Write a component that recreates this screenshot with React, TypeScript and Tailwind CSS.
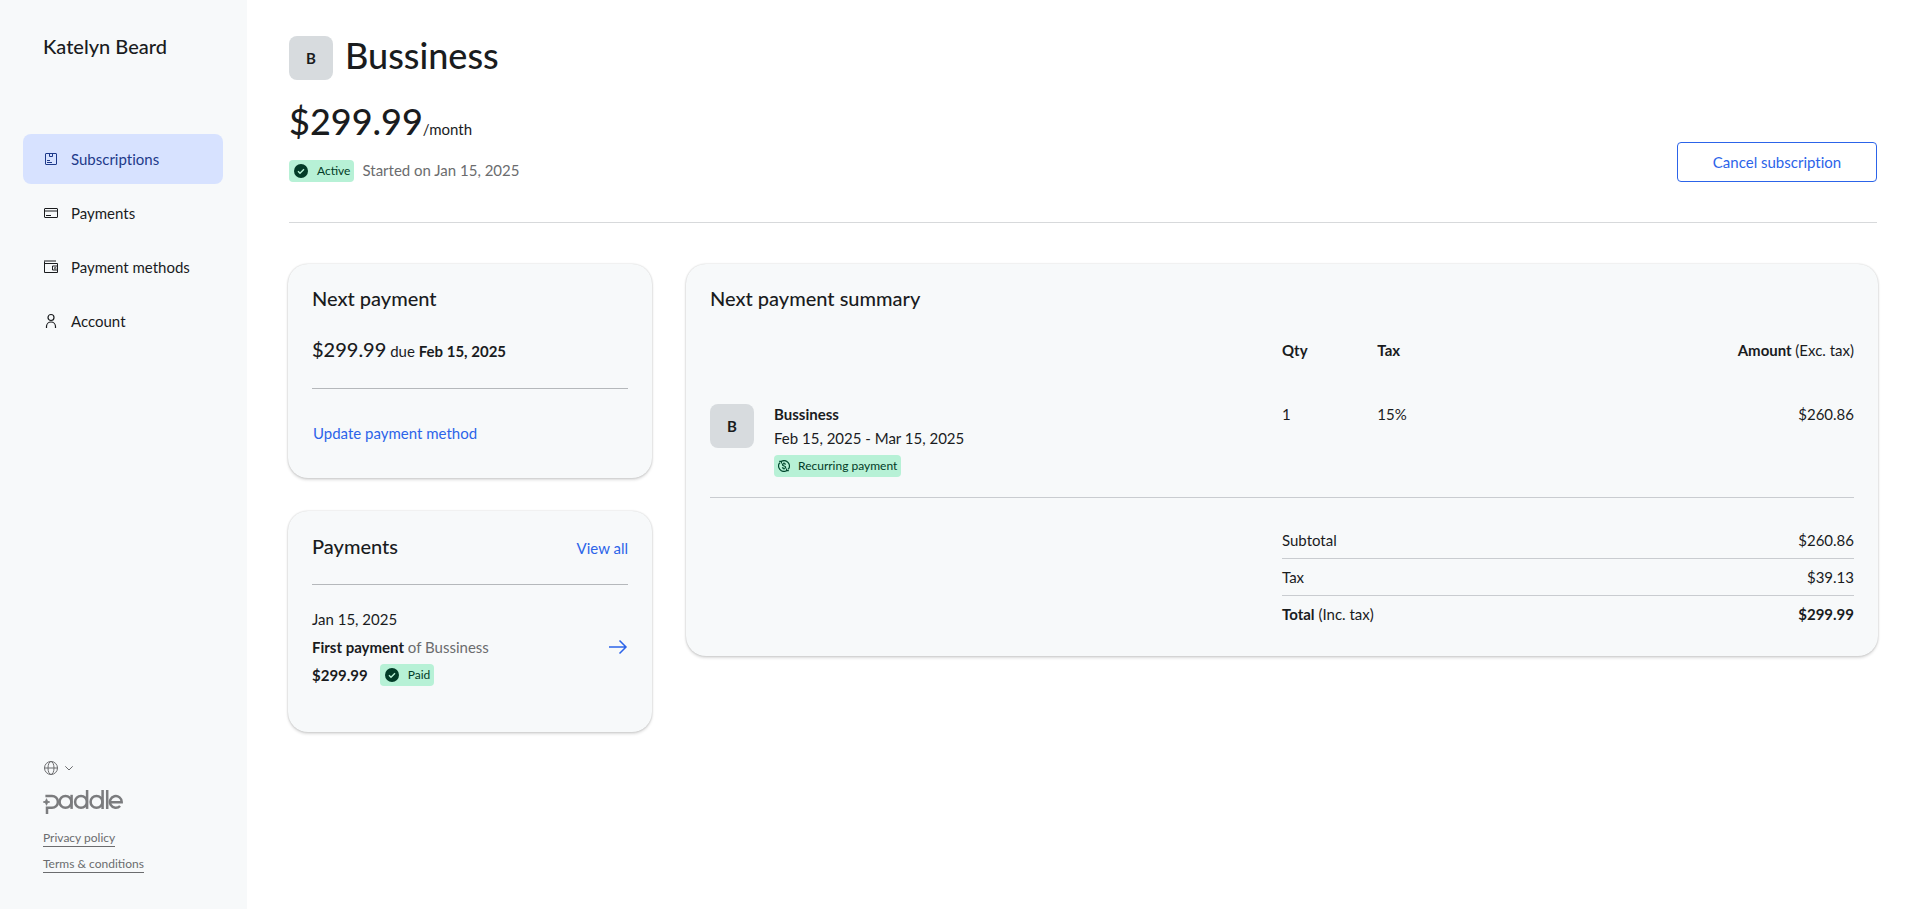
import type { ReactNode } from 'react'

type IconProps = { className?: string }

function SubscriptionsIcon({ className }: IconProps) {
  return (
    <svg className={className} width="16" height="16" viewBox="0 0 16 16" fill="none" stroke="currentColor" strokeLinejoin="round" aria-hidden="true">
      <rect x="2.5" y="2.5" width="11" height="11" rx="0.5" />
      <path d="M6.5 2.5v3h3v-3M4 9.5h3M4 11.5h5" />
    </svg>
  )
}

function CardIcon({ className }: IconProps) {
  return (
    <svg className={className} width="16" height="16" viewBox="0 0 16 16" fill="none" stroke="currentColor" strokeLinejoin="round" aria-hidden="true">
      <rect x="1.5" y="3.5" width="13" height="9" rx="0.5" />
      <path d="M3 10.5h5" />
      <path d="M2 6h12" strokeWidth="2" opacity="0.5" />
    </svg>
  )
}

function WalletIcon({ className }: IconProps) {
  return (
    <svg className={className} width="16" height="16" viewBox="0 0 16 16" fill="none" stroke="currentColor" strokeLinejoin="round" aria-hidden="true">
      <path d="M1.5 2.5v11h13v-9h-13" />
      <path d="M1 2h12" strokeWidth="2" opacity="0.5" />
      <path d="M14 7h-4.500v4h4.500" />
      <path d="M11.5 8.500h1.500v1.500h-1.500z" opacity="0.6" />
    </svg>
  )
}

function AccountIcon({ className }: IconProps) {
  return (
    <svg className={className} width="16" height="16" viewBox="0 0 16 16" fill="none" stroke="currentColor" strokeWidth="1.2" aria-hidden="true">
      <circle cx="8" cy="4.5" r="3" />
      <path d="M3.5 15v-1.500a4.500 4.500 0 0 1 9 0v1.500" />
    </svg>
  )
}

function GlobeIcon() {
  return (
    <svg width="16" height="16" viewBox="0 0 16 16" fill="none" stroke="currentColor" aria-hidden="true">
      <circle cx="8" cy="8" r="6.5" />
      <ellipse cx="8" cy="8" rx="3" ry="6.5" />
      <path d="M1.5 8h13" />
    </svg>
  )
}

function ChevronIcon() {
  return (
    <svg width="10" height="10" viewBox="0 0 10 10" fill="none" stroke="currentColor" aria-hidden="true">
      <path d="M1.300 3.300 5 7l3.700-3.700" />
    </svg>
  )
}

function PaddleLogo() {
  return (
    <svg width="80" height="24" viewBox="0 0 80 24" fill="none" stroke="currentColor" strokeWidth="2.500" role="img" aria-label="Paddle">
      <path d="M2.400 6H9a5.900 5.900 0 0 1 0 11.800H4V24" />
      <path d="M3.500 8.700 4.400 11.100 6.800 12 4.400 12.900 3.500 15.300 2.600 12.900 0.200 12 2.600 11.100z" fill="currentColor" strokeWidth="0.800" />
      <circle cx="22.500" cy="11.900" r="5.900" />
      <path d="M28.600 4.800v14.100" />
      <circle cx="38" cy="11.900" r="5.900" />
      <path d="M44.100 0v18.900" />
      <circle cx="53.500" cy="11.900" r="5.900" />
      <path d="M59.600 0v18.900M64.200 0v18.900" />
      <path d="M67.600 12.200h11.100a5.900 5.900 0 1 0-1.600 3.800" />
    </svg>
  )
}

function CheckBadgeIcon() {
  return (
    <svg width="16" height="16" viewBox="0 0 16 16" aria-hidden="true">
      <circle cx="8" cy="8" r="7" fill="#023b27" />
      <path d="m5 8.200 2 2 4-4" fill="none" stroke="#b7f1d6" strokeWidth="1.400" />
    </svg>
  )
}

function RecurringIcon() {
  return (
    <svg width="12" height="12" viewBox="0 0 12 12" fill="none" stroke="#02492f" strokeWidth="1.200" aria-hidden="true">
      <path d="M3.600 1.200A5.400 5.400 0 0 1 10.200 9.400M8.400 10.800A5.400 5.400 0 0 1 1.800 2.600" />
      <path d="M1.200 1.400h2.200v2M10.800 10.600H8.600v-2" />
      <path d="M7.700 4.500C7.300 3.900 6.800 3.700 6 3.700c-1 0-1.600.4-1.600 1.100 0 1.600 3.300.8 3.300 2.400 0 .7-.7 1.100-1.700 1.100-.8 0-1.400-.3-1.800-.9M6 2.600v1.100M6 8.300v1.100" />
    </svg>
  )
}

function ArrowIcon() {
  return (
    <svg width="20" height="16" viewBox="0 0 20 16" fill="none" stroke="currentColor" strokeWidth="1.500" aria-hidden="true">
      <path d="M1 8h17M11.500 1.500 18 8l-6.500 6.500" />
    </svg>
  )
}

function Badge({ icon, children }: { icon: ReactNode; children: ReactNode }) {
  return (
    <span className="inline-flex h-[22px] items-center gap-2 rounded bg-[#b7f1d6] px-1 text-xs text-[#023b27] [font-variant-ligatures:normal]">
      {icon}
      {children}
    </span>
  )
}

function Avatar() {
  return (
    <span className="flex size-11 shrink-0 items-center justify-center rounded-lg bg-[#d7dbde] text-[15px] font-bold">B</span>
  )
}

function Card({ children }: { children: ReactNode }) {
  return (
    <section className="rounded-[20px] bg-[#f7f9fa] p-6 shadow-[0_0_2px_rgba(0,0,0,0.2),0_2px_3px_rgba(0,0,0,0.14)]">
      {children}
    </section>
  )
}

const navItems = [
  { label: 'Subscriptions', Icon: SubscriptionsIcon, active: true },
  { label: 'Payments', Icon: CardIcon, active: false },
  { label: 'Payment methods', Icon: WalletIcon, active: false },
  { label: 'Account', Icon: AccountIcon, active: false },
]

function Sidebar() {
  return (
    <aside className="flex w-[247px] shrink-0 flex-col bg-[#f7f9fa] px-[23px] pt-8 pb-9">
      <p className="px-5 text-xl leading-7 font-medium">Katelyn Beard</p>
      <nav className="mt-[74px] flex w-[200px] flex-col gap-1">
        {navItems.map(({ label, Icon, active }) => (
          <a
            key={label}
            href="#"
            aria-current={active ? 'page' : undefined}
            className={
              active
                ? 'flex h-[50px] items-center gap-3 rounded-lg bg-[#d7e2ff] px-5 text-[#1e3a8a]'
                : 'flex h-[50px] items-center gap-3 rounded-lg px-5'
            }
          >
            <Icon />
            {label}
          </a>
        ))}
      </nav>
      <div className="mt-auto flex flex-col items-start px-5 text-[#6b6c6e] [font-variant-ligatures:normal]">
        <button type="button" aria-label="Change language" className="flex items-center gap-[5px]">
          <GlobeIcon />
          <ChevronIcon />
        </button>
        <div className="mt-3.5 text-[#7b7c7e]">
          <PaddleLogo />
        </div>
        <a href="#" className="mt-4 border-b border-current text-xs leading-4">Privacy policy</a>
        <a href="#" className="mt-[9px] border-b border-current text-xs leading-4">Terms &amp; conditions</a>
      </div>
    </aside>
  )
}

function Header() {
  return (
    <header className="flex items-end justify-between border-b border-[#d7d9db] pb-10">
      <div>
        <div className="flex items-start gap-3">
          <Avatar />
          <h1 className="text-4xl leading-[38px] font-medium">Bussiness</h1>
        </div>
        <p className="mt-5 flex items-baseline">
          <span className="text-4xl leading-[42px] font-medium">$299.99</span>
          <span className="leading-5">/month</span>
        </p>
        <div className="mt-[18px] flex items-start gap-2">
          <Badge icon={<CheckBadgeIcon />}>Active</Badge>
          <span className="leading-5 text-[#6b6c6e]">Started on Jan 15, 2025</span>
        </div>
      </div>
      <button type="button" className="h-10 w-[200px] rounded border border-[#2c64e9] text-[#2c64e9]">
        Cancel subscription
      </button>
    </header>
  )
}

function NextPayment() {
  return (
    <Card>
      <h2 className="text-xl leading-5 font-medium">Next payment</h2>
      <p className="mt-[25px] leading-8">
        <span className="text-xl leading-8 font-medium">$299.99</span> due <strong className="font-bold">Feb 15, 2025</strong>
      </p>
      <hr className="mt-[21px] border-[#b5b8bb]" />
      <a href="#" className="mt-[31px] mb-2 ml-px block leading-[26px] text-[#2c64e9]">Update payment method</a>
    </Card>
  )
}

function Payments() {
  return (
    <Card>
      <div className="flex items-baseline justify-between">
        <h2 className="text-xl leading-[22px] font-medium">Payments</h2>
        <a href="#" className="leading-5 text-[#2c64e9]">View all</a>
      </div>
      <hr className="mt-[26px] border-[#b5b8bb]" />
      <div className="mt-5 mb-[19px] flex items-center justify-between">
        <div className="leading-7">
          <p>Jan 15, 2025</p>
          <p className="text-[#6b6c6e]">
            <strong className="font-bold text-[#1a1c1e]">First payment</strong> of Bussiness
          </p>
          <p className="flex items-center gap-3">
            <strong className="font-bold">$299.99</strong>
            <Badge icon={<CheckBadgeIcon />}>Paid</Badge>
          </p>
        </div>
        <a href="#" aria-label="View first payment" className="text-[#2c64e9]">
          <ArrowIcon />
        </a>
      </div>
    </Card>
  )
}

function Summary() {
  return (
    <Card>
      <h2 className="text-xl leading-5 font-medium">Next payment summary</h2>
      <table className="mt-[26px] w-full table-fixed text-left">
        <colgroup>
          <col className="w-1/2" />
          <col className="w-1/12" />
          <col className="w-5/12" />
        </colgroup>
        <thead>
          <tr className="h-8 align-middle">
            <td />
            <th className="font-bold">Qty</th>
            <th>
              <span className="flex justify-between font-bold">
                <span>Tax</span>
                <span>Amount <span className="font-normal">(Exc. tax)</span></span>
              </span>
            </th>
          </tr>
        </thead>
        <tbody>
          <tr className="border-b border-[#c9ccd0] align-top leading-6">
            <td className="pt-9 pb-5">
              <div className="flex gap-5">
                <div className="pt-0.5">
                  <Avatar />
                </div>
                <div>
                  <p className="font-bold">Bussiness</p>
                  <p>Feb 15, 2025 - Mar 15, 2025</p>
                  <p className="mt-[5px] flex">
                    <Badge icon={<RecurringIcon />}>Recurring payment</Badge>
                  </p>
                </div>
              </div>
            </td>
            <td className="pt-9">1</td>
            <td className="pt-9">
              <span className="flex justify-between">
                <span>15%</span>
                <span>$260.86</span>
              </span>
            </td>
          </tr>
        </tbody>
      </table>
      <dl className="mt-6 ml-auto w-1/2 divide-y divide-[#c9ccd0] leading-9">
        <div className="flex justify-between">
          <dt>Subtotal</dt>
          <dd>$260.86</dd>
        </div>
        <div className="flex justify-between">
          <dt>Tax</dt>
          <dd>$39.13</dd>
        </div>
        <div className="flex justify-between">
          <dt><strong className="font-bold">Total</strong> (Inc. tax)</dt>
          <dd className="font-bold">$299.99</dd>
        </div>
      </dl>
    </Card>
  )
}

export default function App() {
  return (
    <div className="flex min-h-screen bg-white font-['Lato',sans-serif] text-[15px] text-[#1a1c1e] [font-variant-ligatures:none]">
      <Sidebar />
      <main className="min-w-0 flex-1 px-9 pt-9 pb-9 pl-[42px]">
        <Header />
        <div className="-mx-px mt-[41px] grid grid-cols-[364px_minmax(0,1fr)] items-start gap-x-[34px]">
          <div className="flex flex-col gap-[33px]">
            <NextPayment />
            <Payments />
          </div>
          <Summary />
        </div>
      </main>
    </div>
  )
}
